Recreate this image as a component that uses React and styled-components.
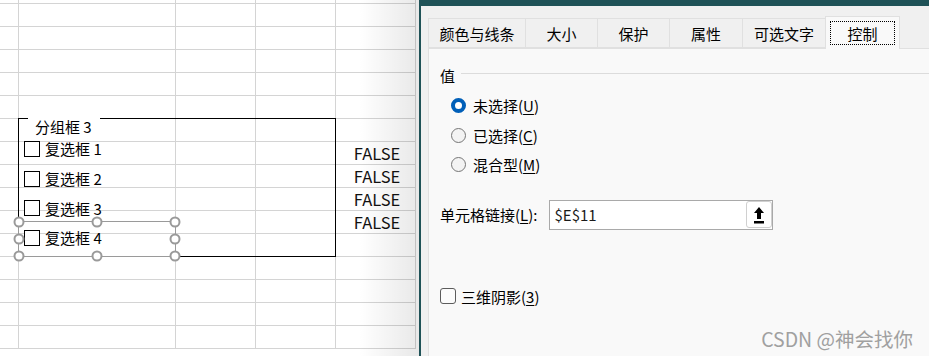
import styled, { createGlobalStyle } from "styled-components"

const Global = createGlobalStyle`
  html, body { margin: 0; padding: 0; background: #fff; }
  body { font-family: "Noto Sans CJK SC", "Noto Sans", sans-serif; color: #000; }
`

const Screen = styled.div`
  display: flex;
  width: 929px;
  height: 356px;
  overflow: hidden;
`

/* ---------- spreadsheet ---------- */
const Sheet = styled.div`
  position: relative;
  width: 419px;
  flex: none;
  display: grid;
  grid-template-columns: 19px 157px 80px 80px 80px 3px;
  grid-template-rows: 4px repeat(15, 23px);
  background: #fff;
`

const Cell = styled.div`
  box-sizing: border-box;
  border-right: ${p => (p.$edge ? "none" : "1px solid #d4d4d4")};
  border-bottom: ${p => (p.$edge ? "none" : "1px solid #d4d4d4")};
  display: flex;
  align-items: flex-end;
  justify-content: center;
  padding: 0 0 1px 3px;
  font-family: "Noto Sans CJK SC", sans-serif;
  font-size: 16.5px;
  line-height: 20px;
  color: #111;
`

const Shade = styled.div`
  position: absolute;
  top: 0;
  bottom: 0;
  right: 0;
  width: 60px;
  background: linear-gradient(to right, rgba(0, 0, 0, 0), rgba(0, 0, 0, 0.09));
  pointer-events: none;
`

const GroupBox = styled.div`
  position: absolute;
  left: 18px;
  top: 118px;
  width: 318px;
  height: 139px;
  box-sizing: border-box;
  border: 1px solid #000;
`

const Legend = styled.span`
  position: absolute;
  left: 9px;
  top: -2px;
  padding: 0 6px 0 7px;
  background: #fff;
  font-size: 15px;
  line-height: 20px;
`

const LegendGap = styled.span`
  position: absolute;
  left: 9px;
  top: -1px;
  width: 72px;
  height: 2px;
  background: #fff;
`

const CheckList = styled.div`
  display: flex;
  flex-direction: column;
  padding: 15px 0 0 5px;
`

const CheckRow = styled.div`
  display: flex;
  align-items: center;
  gap: 5px;
  height: 29.7px;
  font-size: 15px;
`

const SheetBox = styled.span`
  width: 16px;
  height: 16px;
  box-sizing: border-box;
  border: 1px solid #000;
  background: #fff;
`

const Selection = styled.div`
  position: absolute;
  left: 18px;
  top: 221px;
  width: 158px;
  height: 36px;
  box-sizing: border-box;
  border: 1px solid #9a9a9a;
`

const Handle = styled.span`
  position: absolute;
  left: ${p => p.$x}%;
  top: ${p => p.$y}%;
  width: 11px;
  height: 11px;
  box-sizing: border-box;
  border: 2px solid #9a9a9a;
  border-radius: 50%;
  background: #fff;
  transform: translate(-50%, -50%);
`

/* ---------- dialog ---------- */
const Dialog = styled.div`
  position: relative;
  flex: 1;
  display: flex;
  flex-direction: column;
  background: #f0f0f0;
  border-top: 6px solid #1f5257;
  border-left: 2px solid #1f5257;
  padding: 10px 0 0 7px;
  font-size: 15px;
`

const Tabs = styled.div`
  display: flex;
  align-items: flex-end;
  padding-left: 1px;
  position: relative;
  z-index: 1;
`

const Tab = styled.div`
  box-sizing: border-box;
  flex: none;
  width: ${p => p.$w}px;
  height: ${p => (p.$active ? 33 : 30)}px;
  padding: ${p => (p.$active ? "4px" : "0")};
  margin-left: -1px;
  margin-bottom: ${p => (p.$active ? "-1px" : "0")};
  display: flex;
  align-items: center;
  justify-content: center;
  background: ${p => (p.$active ? "#f9f9f9" : "#f0f0f0")};
  border: 1px solid #e0e0e0;
  border-bottom: ${p => (p.$active ? "none" : "1px solid #e0e0e0")};
`

const Focus = styled.span`
  flex: 1;
  align-self: stretch;
  display: flex;
  align-items: center;
  justify-content: center;
  border: 1px dotted #000;
`

const Panel = styled.div`
  flex: 1;
  background: #f9f9f9;
  border-top: 1px solid #e0e0e0;
  border-left: 1px solid #e0e0e0;
  padding: 16px 0 0 11px;
  display: flex;
  flex-direction: column;
`

const SectionHead = styled.div`
  display: flex;
  align-items: center;
  gap: 6px;
  height: 20px;
  & > i {
    flex: 1;
    height: 1px;
    background: #dcdcdc;
    margin-top: -3px;
  }
`

const Radios = styled.div`
  display: flex;
  flex-direction: column;
  margin: 6px 0 0 11px;
`

const RadioRow = styled.label`
  display: flex;
  align-items: center;
  gap: 7px;
  height: 29.5px;
`

const RadioDot = styled.span`
  width: 15px;
  height: 15px;
  box-sizing: border-box;
  border-radius: 50%;
  border: ${p => (p.$on ? "4.5px solid #005fb8" : "1px solid #767676")};
  background: ${p => (p.$on ? "#fff" : "#f3f3f3")};
`

const LinkRow = styled.div`
  display: flex;
  align-items: center;
  gap: 12px;
  margin-top: 20px;
`

const Field = styled.div`
  width: 224px;
  height: 30px;
  box-sizing: border-box;
  border: 1px solid #a9a9a9;
  background: #fff;
  display: flex;
  align-items: center;
  justify-content: space-between;
  padding: 0 0 0 4px;
  color: #1a1a1a;
`

const PickButton = styled.span`
  width: 26px;
  height: 27px;
  box-sizing: border-box;
  border: 1px solid #d0d0d0;
  border-radius: 3px;
  background: #fff;
  display: flex;
  align-items: center;
  justify-content: center;
`

const CheckLine = styled.label`
  display: flex;
  align-items: center;
  gap: 5px;
  margin-top: 56px;
`

const DlgBox = styled.span`
  width: 16px;
  height: 16px;
  box-sizing: border-box;
  border: 1px solid #5c5c5c;
  border-radius: 3px;
  background: #fbfbfb;
`

const Watermark = styled.div`
  position: absolute;
  right: 16px;
  bottom: 5px;
  font-size: 19.5px;
  line-height: 24px;
  color: #a0a0a0;
`

const U = styled.span`
  text-decoration: underline;
  text-underline-offset: 2px;
`

const tabs = [
  ["颜色与线条", 98],
  ["大小", 73],
  ["保护", 73],
  ["属性", 74],
  ["可选文字", 84],
  ["控制", 75],
]

const falseRows = [7, 8, 9, 10]

const App = () => {
  const cells = []
  for (let r = 0; r < 16; r++) {
    for (let c = 0; c < 6; c++) {
      cells.push(
        <Cell key={r + "-" + c} $edge={c === 5}>
          {c === 4 && falseRows.includes(r) ? "FALSE" : null}
        </Cell>
      )
    }
  }

  return (
    <Screen>
      <Global />
      <Sheet>
        {cells}
        <GroupBox>
          <LegendGap />
          <Legend>分组框 3</Legend>
          <CheckList>
            {[1, 2, 3, 4].map(n => (
              <CheckRow key={n}>
                <SheetBox />
                复选框 {n}
              </CheckRow>
            ))}
          </CheckList>
        </GroupBox>
        <Selection>
          {[0, 50, 100].map(x =>
            [0, 50, 100].map(y =>
              x === 50 && y === 50 ? null : <Handle key={x + "-" + y} $x={x} $y={y} />
            )
          )}
        </Selection>
        <Shade />
      </Sheet>

      <Dialog>
        <Tabs>
          {tabs.map(([t, w], i) =>
            i === tabs.length - 1 ? (
              <Tab key={t} $w={w} $active>
                <Focus>{t}</Focus>
              </Tab>
            ) : (
              <Tab key={t} $w={w}>
                {t}
              </Tab>
            )
          )}
        </Tabs>
        <Panel>
          <SectionHead>
            值<i />
          </SectionHead>
          <Radios>
            <RadioRow>
              <RadioDot $on />
              <span>未选择(<U>U</U>)</span>
            </RadioRow>
            <RadioRow>
              <RadioDot />
              <span>已选择(<U>C</U>)</span>
            </RadioRow>
            <RadioRow>
              <RadioDot />
              <span>混合型(<U>M</U>)</span>
            </RadioRow>
          </Radios>
          <LinkRow>
            <span>单元格链接(<U>L</U>):</span>
            <Field>
              $E$11
              <PickButton>
                <svg width="12" height="18" viewBox="0 0 12 18">
                  <path d="M6 1 L11 7 L8 7 L8 13 L4 13 L4 7 L1 7 Z" fill="#000" />
                  <rect x="1" y="15" width="10" height="2.5" fill="#000" />
                </svg>
              </PickButton>
            </Field>
          </LinkRow>
          <CheckLine>
            <DlgBox />
            <span>三维阴影(<U>3</U>)</span>
          </CheckLine>
        </Panel>
        <Watermark>CSDN @神会找你</Watermark>
      </Dialog>
    </Screen>
  )
}

export default App
